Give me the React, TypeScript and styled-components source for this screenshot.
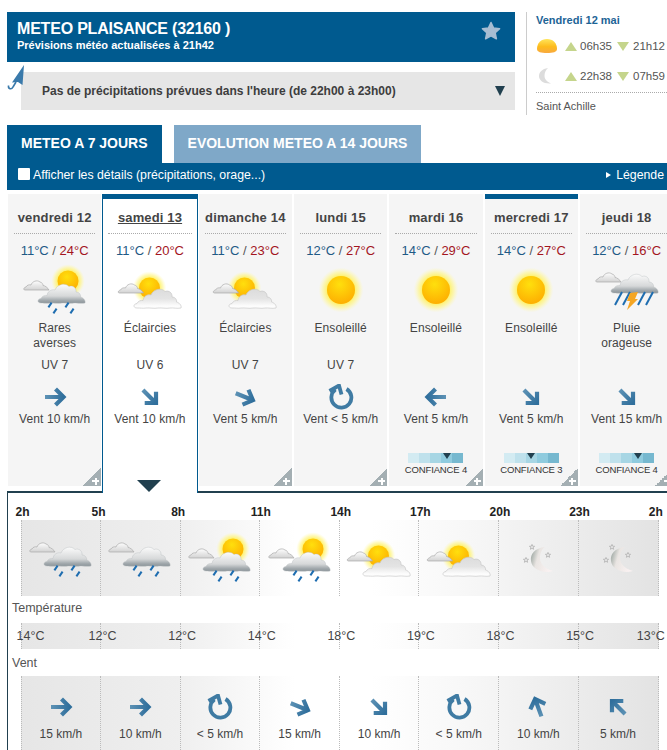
import styled, { createGlobalStyle, css } from 'styled-components';

const BLUE = '#005a8f';
const DARK = '#21404f';
const TEXT = '#444';

const GlobalStyle = createGlobalStyle`
  html, body {
    margin: 0;
    padding: 0;
    background: #fff;
    overflow: hidden;
  }
  body {
    font-family: "Liberation Sans", Arial, sans-serif;
    color: ${TEXT};
  }
`;

type WeatherKind = 'rare' | 'partly' | 'sunny' | 'storm' | 'rain' | 'sunrain' | 'night';

interface Day {
  name: string;
  min: number;
  max: number;
  weather: WeatherKind;
  label: string[];
  uv?: number;
  wind: number | 'var';
  speed: string;
  confidence?: number;
  selected?: boolean;
  marked?: boolean;
}

const days: Day[] = [
  { name: 'vendredi 12', min: 11, max: 24, weather: 'rare', label: ['Rares', 'averses'], uv: 7, wind: 0, speed: 'Vent 10 km/h' },
  { name: 'samedi 13', min: 11, max: 20, weather: 'partly', label: ['Éclaircies'], uv: 6, wind: 45, speed: 'Vent 10 km/h', selected: true },
  { name: 'dimanche 14', min: 11, max: 23, weather: 'partly', label: ['Éclaircies'], uv: 7, wind: 22, speed: 'Vent 5 km/h' },
  { name: 'lundi 15', min: 12, max: 27, weather: 'sunny', label: ['Ensoleillé'], uv: 7, wind: 'var', speed: 'Vent < 5 km/h' },
  { name: 'mardi 16', min: 14, max: 29, weather: 'sunny', label: ['Ensoleillé'], wind: 180, speed: 'Vent 5 km/h', confidence: 4 },
  { name: 'mercredi 17', min: 14, max: 27, weather: 'sunny', label: ['Ensoleillé'], wind: 45, speed: 'Vent 5 km/h', confidence: 3, marked: true },
  { name: 'jeudi 18', min: 12, max: 16, weather: 'storm', label: ['Pluie', 'orageuse'], wind: 45, speed: 'Vent 15 km/h', confidence: 4 },
];

const hours = ['2h', '5h', '8h', '11h', '14h', '17h', '20h', '23h', '2h'];
const hourWeather: WeatherKind[] = ['rain', 'rain', 'sunrain', 'sunrain', 'partly', 'partly', 'night', 'night'];
const temps = [14, 12, 12, 14, 18, 19, 18, 15, 13];
const hourWind: { angle: number | 'var'; speed: string }[] = [
  { angle: 0, speed: '15 km/h' },
  { angle: 0, speed: '10 km/h' },
  { angle: 'var', speed: '< 5 km/h' },
  { angle: 22, speed: '15 km/h' },
  { angle: 45, speed: '10 km/h' },
  { angle: 'var', speed: '< 5 km/h' },
  { angle: -110, speed: '10 km/h' },
  { angle: -135, speed: '5 km/h' },
];

const confidenceColors = ['#d3ebf2', '#bfe1ec', '#a7d6e4', '#8fcbde', '#76b8cf'];

const bigCloud = 'M3 20 C-1 20 -1 16 3 15.5 C4 13 7 12 9 12.5 C9.5 8.5 13 6 17 7 C19 1.5 27 -1 31 3.5 C35 2 38.5 5 38 9 C41 9 43 11.5 42.5 14 C45 14.5 48 17.5 47 20 C43 20.8 39 19.6 36 20 C32 20.8 28 19.6 24 20 C20 20.8 16 19.6 12 20 C9 20.6 6 19.8 3 20 Z';
const smallCloud = 'M1 10 C-1 10 -0.5 7.5 2 7 C3 5 5 4.5 7 5 C8 1.5 13 -0.5 16 2 C18 2.5 19 4 19 5.5 C21 5.5 24 8 25 10 Z';

function Drops() {
  const spots = [[30, 37], [35, 43], [47, 37], [52, 43]];
  return (
    <g stroke="#1e6db0" strokeWidth="2">
      {spots.map(([x, y]) => (
        <line key={`${x}-${y}`} x1={x + 1.6} y1={y - 2.4} x2={x - 1.6} y2={y + 2.4} />
      ))}
    </g>
  );
}

function Sun({ x, y, r }: { x: number; y: number; r: number }) {
  return (
    <g>
      <circle cx={x} cy={y} r={r * 1.6} fill="url(#sunGlow)" />
      <circle cx={x} cy={y} r={r} fill="url(#sunCore)" />
    </g>
  );
}

function Star({ x, y }: { x: number; y: number }) {
  return (
    <polygon
      transform={`translate(${x} ${y})`}
      points="0,-2.6 0.8,-0.8 2.6,-0.7 1.2,0.5 1.6,2.3 0,1.3 -1.6,2.3 -1.2,0.5 -2.6,-0.7 -0.8,-0.8"
      fill="#e6e6e6"
      stroke="#aaa"
      strokeWidth="0.7"
    />
  );
}

function WeatherIcon({ kind }: { kind: WeatherKind }) {
  return (
    <IconSvg viewBox="0 0 70 50">
      {kind === 'sunny' && <Sun x={35} y={22} r={14} />}
      {kind === 'partly' && (
        <g>
          <Sun x={34.5} y={20} r={10.5} />
          <path d={smallCloud} transform="translate(3.5 15)" fill="url(#smallCloud)" stroke="#aaa" strokeWidth="0.7" />
          <path d={bigCloud} transform="translate(19 20)" fill="url(#softCloud)" stroke="#c8c8c8" strokeWidth="0.7" />
        </g>
      )}
      {(kind === 'rare' || kind === 'sunrain') && (
        <g>
          <Sun x={48} y={13} r={10.5} />
          <path d={smallCloud} transform="translate(4 12)" fill="url(#smallCloud)" stroke="#aaa" strokeWidth="0.7" />
          <path d={bigCloud} transform="translate(18 15)" fill="url(#rainCloud)" stroke="#b5babd" strokeWidth="0.4" />
          <Drops />
        </g>
      )}
      {kind === 'rain' && (
        <g>
          <path d={smallCloud} transform="translate(4 6)" fill="url(#smallCloud)" stroke="#aaa" strokeWidth="0.7" />
          <path d={bigCloud} transform="translate(18 10)" fill="url(#rainCloud)" stroke="#b5babd" strokeWidth="0.4" />
          <g transform="translate(0 -5)">
            <Drops />
          </g>
        </g>
      )}
      {kind === 'storm' && (
        <g>
          <path d={smallCloud} transform="translate(4 4)" fill="url(#smallCloud)" stroke="#aaa" strokeWidth="0.7" />
          <path d={bigCloud} transform="translate(19 5)" fill="url(#rainCloud)" stroke="#b5babd" strokeWidth="0.4" />
          <g stroke="#1e6db0" strokeWidth="2">
            <line x1="30" y1="24" x2="23" y2="37" />
            <line x1="38" y1="24" x2="31" y2="37" />
            <line x1="53" y1="24" x2="46" y2="37" />
            <line x1="61" y1="24" x2="54" y2="37" />
          </g>
          <polygon points="38,25 46,24 43,31 46,31 35,42 38,33 35,33" fill="#f5a623" />
        </g>
      )}
      {kind === 'night' && (
        <g>
          <path d="M42 11 C32 12 27 18 28 25 C29 33 39 38 50 35 C42 33 37 28 37 22 C37 17 39 13 42 11 Z" fill="url(#moonShade)" />
          <Star x={29} y={11} />
          <Star x={23} y={24} />
          <Star x={45} y={19} />
        </g>
      )}
    </IconSvg>
  );
}

function WindIcon({ angle }: { angle: number | 'var' }) {
  if (angle === 'var') {
    return (
      <ArrowSvg viewBox="0 0 26 26">
        <path d="M18.5 5 A10 10 0 1 1 7.5 5.5" fill="none" stroke="#3f7ba3" strokeWidth="3.8" />
        <path d="M1.5 7 L11 1.5 L13.5 10.5" fill="none" stroke="#3f7ba3" strokeWidth="3.8" />
      </ArrowSvg>
    );
  }
  return (
    <ArrowSvg viewBox="0 0 26 26">
      <g transform={`rotate(${angle} 13 13)`}>
        <path d="M3 13 H21 M13.5 5 L21.5 13 L13.5 21" fill="none" stroke="url(#windStroke)" strokeWidth="4.2" />
      </g>
    </ArrowSvg>
  );
}

function App() {
  return (
    <Page>
      <GlobalStyle />
      <HiddenDefs>
        <defs>
          <radialGradient id="sunGlow">
            <stop offset="0.55" stopColor="#fff04a" stopOpacity="1" />
            <stop offset="0.8" stopColor="#fff58a" stopOpacity="0.6" />
            <stop offset="1" stopColor="#fff9b0" stopOpacity="0" />
          </radialGradient>
          <radialGradient id="sunCore" cx="0.45" cy="0.3" r="0.8">
            <stop offset="0" stopColor="#ffdf0d" />
            <stop offset="1" stopColor="#fda800" />
          </radialGradient>
          <linearGradient id="smallCloud" x1="0" y1="0" x2="0" y2="1">
            <stop offset="0" stopColor="#fdfdfd" />
            <stop offset="1" stopColor="#d2d2d2" />
          </linearGradient>
          <linearGradient id="softCloud" x1="0" y1="0" x2="0" y2="1">
            <stop offset="0" stopColor="#dcdcdc" />
            <stop offset="0.5" stopColor="#e4e4e4" />
            <stop offset="0.85" stopColor="#fbfbfb" />
            <stop offset="1" stopColor="#ffffff" />
          </linearGradient>
          <linearGradient id="rainCloud" x1="0" y1="0" x2="0" y2="1">
            <stop offset="0" stopColor="#fbfbfb" />
            <stop offset="0.62" stopColor="#d6d8d9" />
            <stop offset="0.84" stopColor="#a3aaae" />
            <stop offset="1" stopColor="#8b9499" />
          </linearGradient>
          <linearGradient id="moonShade" x1="0" y1="0" x2="1" y2="0.3">
            <stop offset="0" stopColor="#8d9a94" />
            <stop offset="0.4" stopColor="#e9e5e2" />
            <stop offset="1" stopColor="#f9f1f1" />
          </linearGradient>
          <linearGradient id="windStroke" x1="0" y1="0" x2="1" y2="0">
            <stop offset="0" stopColor="#5d92b5" />
            <stop offset="1" stopColor="#306f9c" />
          </linearGradient>
          <linearGradient id="riseSun" x1="0" y1="0" x2="0" y2="1">
            <stop offset="0" stopColor="#ffe55a" />
            <stop offset="0.55" stopColor="#fdbb1c" />
            <stop offset="1" stopColor="#f8a940" />
          </linearGradient>
        </defs>
      </HiddenDefs>

      <TopRow>
        <TopLeft>
          <Header>
            <div>
              <City>METEO PLAISANCE (32160 )</City>
              <Updated>Prévisions météo actualisées à 21h42</Updated>
            </div>
            <FavStar viewBox="0 0 20 20">
              <polygon
                points="10,1.5 12.6,7 18.6,7.7 14.2,11.8 15.4,17.8 10,14.8 4.6,17.8 5.8,11.8 1.4,7.7 7.4,7"
                fill="#a7bdd3"
                stroke="#a7bdd3"
                strokeWidth="1.5"
                strokeLinejoin="round"
              />
            </FavStar>
          </Header>
          <RainBar>
            <Umbrella viewBox="0 0 18 26">
              <path d="M17 0 L15.5 20 L11 17 L5 17.5 Z" fill="#3a7aab" />
              <path d="M9 17 L6 22 C4.5 25 1 24 1.5 20.5" fill="none" stroke="#3a7aab" strokeWidth="1.6" />
            </Umbrella>
            <RainText>Pas de précipitations prévues dans l'heure (de 22h00 à 23h00)</RainText>
            <DownCaret />
          </RainBar>
        </TopLeft>
        <Ephemeris>
          <EphDate>Vendredi 12 mai</EphDate>
          <EphRow>
            <EphIcon viewBox="0 0 22 16">
              <path d="M1 11 C1 5 5 1 11 1 C17 1 21 5 21 11 C21 14 17 15 11 15 C5 15 1 14 1 11 Z" fill="url(#riseSun)" />
            </EphIcon>
            <UpMark />
            <EphTime>06h35</EphTime>
            <DownMark />
            <EphTime>21h12</EphTime>
          </EphRow>
          <EphRow>
            <EphIcon viewBox="0 0 22 16">
              <path d="M12 0 C6 1 3 4 3 8 C3 12 7 16 15 15.5 C11 14 8.5 11 8.5 8 C8.5 5 9.5 2 12 0 Z" fill="#dcdcdc" />
            </EphIcon>
            <UpMark />
            <EphTime>22h38</EphTime>
            <DownMark />
            <EphTime>07h59</EphTime>
          </EphRow>
          <Saint>Saint Achille</Saint>
        </Ephemeris>
      </TopRow>

      <Tabs>
        <Tab $active>METEO A 7 JOURS</Tab>
        <Tab>EVOLUTION METEO A 14 JOURS</Tab>
      </Tabs>
      <OptionsBar>
        <DetailsToggle>
          <FakeCheck />
          Afficher les détails (précipitations, orage...)
        </DetailsToggle>
        <Legend>
          <LegendCaret />
          Légende
        </Legend>
      </OptionsBar>

      <DaysGrid>
        {days.map((day) => (
          <DayCard key={day.name} $selected={day.selected} $marked={day.marked}>
            <DayName $selected={day.selected}>{day.name}</DayName>
            <Temps>
              <Cold>{day.min}°C</Cold> / <Hot>{day.max}°C</Hot>
            </Temps>
            <IconSlot>
              <WeatherIcon kind={day.weather} />
            </IconSlot>
            <Condition>
              {day.label.map((line) => (
                <div key={line}>{line}</div>
              ))}
            </Condition>
            <Uv>{day.uv ? `UV ${day.uv}` : ''}</Uv>
            <WindSlot>
              <WindIcon angle={day.wind} />
            </WindSlot>
            <WindText>{day.speed}</WindText>
            {day.confidence && (
              <Confidence>
                <ConfidenceBar>
                  {confidenceColors.map((color, i) => (
                    <ConfidenceStep key={color} $color={color} $active={i === day.confidence! - 1} />
                  ))}
                </ConfidenceBar>
                <ConfidenceText>CONFIANCE {day.confidence}</ConfidenceText>
              </Confidence>
            )}
            {day.selected ? <SelectedCaret /> : <Fold />}
          </DayCard>
        ))}
      </DaysGrid>

      <Detail>
        <HoursRow>
          {hours.map((h, i) => (
            <HourLabel key={`${h}-${i}`}>{h}</HourLabel>
          ))}
        </HoursRow>
        <SkyRow>
          {hourWeather.map((kind, i) => (
            <SkyCell key={i}>
              <WeatherIcon kind={kind} />
            </SkyCell>
          ))}
        </SkyRow>
        <RowTitle>Température</RowTitle>
        <TempStrip>
          {hourWeather.map((_, i) => (
            <TempTick key={i} />
          ))}
          <TempLabels>
            {temps.map((t, i) => (
              <TempLabel key={i}>{t}°C</TempLabel>
            ))}
          </TempLabels>
        </TempStrip>
        <WindTitle>Vent</WindTitle>
        <HourWindRow>
          {hourWind.map((w, i) => (
            <HourWindCell key={i}>
              <WindIcon angle={w.angle} />
              <HourWindText>{w.speed}</HourWindText>
            </HourWindCell>
          ))}
        </HourWindRow>
      </Detail>
    </Page>
  );
}

export default App;

const dayGradient = css`
  background: linear-gradient(90deg, #e6e6e6 0%, #efefef 25%, #fff 43%, #fff 55%, #f6f6f6 72%, #ededed 85%, #e3e3e3 100%);
`;

const Page = styled.div`
  width: 667px;
  height: 750px;
  overflow: hidden;
  box-sizing: border-box;
  padding: 12px 0 0 7px;
`;

const HiddenDefs = styled.svg`
  display: block;
  width: 0;
  height: 0;
`;

const TopRow = styled.div`
  display: flex;
  height: 103px;
`;

const TopLeft = styled.div`
  width: 508px;
  flex: none;
`;

const Header = styled.div`
  height: 50px;
  box-sizing: border-box;
  background: ${BLUE};
  color: #fff;
  padding: 9px 14px 0 10px;
  display: flex;
  justify-content: space-between;
`;

const City = styled.div`
  font-size: 16px;
  font-weight: bold;
  line-height: 16px;
  letter-spacing: -0.2px;
`;

const Updated = styled.div`
  font-size: 11px;
  font-weight: bold;
  line-height: 13px;
  margin-top: 2px;
`;

const FavStar = styled.svg`
  width: 20px;
  height: 20px;
`;

const RainBar = styled.div`
  position: relative;
  height: 38px;
  margin: 10px 0 0 14px;
  background: #e6e6e6;
  display: flex;
  align-items: center;
  justify-content: space-between;
  padding: 0 10px 0 21px;
`;

const Umbrella = styled.svg`
  position: absolute;
  left: -14px;
  top: -7px;
  width: 18px;
  height: 26px;
`;

const RainText = styled.div`
  font-size: 12px;
  font-weight: bold;
  color: #3d3d3d;
`;

const DownCaret = styled.div`
  width: 0;
  height: 0;
  border-left: 5.5px solid transparent;
  border-right: 5.5px solid transparent;
  border-top: 10px solid ${DARK};
`;

const Ephemeris = styled.div`
  margin-left: 11px;
  padding-left: 9px;
  border-left: 1px solid #ccc;
  width: 131px;
  flex: none;
  font-size: 11px;
`;

const EphDate = styled.div`
  font-weight: bold;
  color: #1d6496;
  line-height: 14px;
  margin-top: 1px;
  margin-bottom: 4px;
`;

const EphRow = styled.div`
  display: flex;
  align-items: center;
  height: 30px;
  color: #555;
`;

const EphIcon = styled.svg`
  width: 22px;
  height: 16px;
  flex: none;
  margin-right: 7px;
`;

const UpMark = styled.div`
  width: 0;
  height: 0;
  border-left: 6px solid transparent;
  border-right: 6px solid transparent;
  border-bottom: 9px solid #c5d58c;
  margin-right: 3px;
`;

const DownMark = styled.div`
  width: 0;
  height: 0;
  border-left: 6px solid transparent;
  border-right: 6px solid transparent;
  border-top: 9px solid #c5d58c;
  margin: 0 4px 0 5px;
`;

const EphTime = styled.span`
  font-size: 11.5px;
`;

const Saint = styled.div`
  border-top: 1px dotted #aaa;
  margin-top: 1px;
  padding-top: 7px;
  line-height: 13px;
  color: #555;
`;

const Tabs = styled.div`
  display: flex;
  gap: 12px;
  margin-top: 10px;
`;

const Tab = styled.div<{ $active?: boolean }>`
  height: 38px;
  padding: 0 14px 2px;
  box-sizing: border-box;
  display: flex;
  align-items: center;
  color: #fff;
  font-size: 14px;
  font-weight: bold;
  background: ${(p) => (p.$active ? BLUE : '#7fa8c8')};
`;

const OptionsBar = styled.div`
  height: 27px;
  width: 660px;
  box-sizing: border-box;
  background: ${BLUE};
  color: #fff;
  font-size: 12.3px;
  display: flex;
  align-items: center;
  justify-content: space-between;
  padding: 0 3px 3px 11px;
`;

const DetailsToggle = styled.div`
  display: flex;
  align-items: center;
  gap: 3px;
`;

const FakeCheck = styled.span`
  width: 12px;
  height: 12px;
  background: #fff;
  border-radius: 1px;
  margin-top: -3px;
`;

const Legend = styled.div`
  display: flex;
  align-items: center;
  gap: 5px;
`;

const LegendCaret = styled.span`
  width: 0;
  height: 0;
  border-top: 3.5px solid transparent;
  border-bottom: 3.5px solid transparent;
  border-left: 5px solid #fff;
`;

const DaysGrid = styled.div`
  display: grid;
  grid-template-columns: repeat(7, 93.33px);
  column-gap: 2px;
  align-items: start;
  margin: 4px 0 0 1px;
`;

const DayCard = styled.div<{ $selected?: boolean; $marked?: boolean }>`
  position: relative;
  box-sizing: border-box;
  height: ${(p) => (p.$selected ? '299px' : '292px')};
  margin: ${(p) => (p.$selected ? '0 -1px' : '0')};
  padding: 11px 6px 0;
  text-align: center;
  font-size: 12px;
  letter-spacing: 0.1px;
  background: ${(p) => (p.$selected ? '#fff' : '#f5f5f5')};
  border-top: 5px solid ${(p) => (p.$selected || p.$marked ? BLUE : 'transparent')};
  z-index: ${(p) => (p.$selected ? 1 : 0)};
  ${(p) =>
    p.$selected &&
    css`
      border-left: 1px solid ${BLUE};
      border-right: 1px solid ${BLUE};
      padding: 11px 5px 0;
    `}
`;

const DayName = styled.div<{ $selected?: boolean }>`
  font-size: 13px;
  font-weight: bold;
  line-height: 16px;
  letter-spacing: 0.15px;
  padding-bottom: 7px;
  white-space: nowrap;
  border-bottom: 1px dotted #aaa;
  color: #444;
  text-decoration: ${(p) => (p.$selected ? 'underline' : 'none')};
`;

const Temps = styled.div`
  margin-top: 10px;
  line-height: 14px;
  font-size: 13px;
  letter-spacing: 0;
  color: #555;
`;

const Cold = styled.span`
  color: #1f5a85;
`;

const Hot = styled.span`
  color: #a3151f;
`;

const IconSlot = styled.div`
  height: 50px;
  margin-top: 10px;
  display: flex;
  justify-content: center;
`;

const IconSvg = styled.svg`
  width: 70px;
  height: 50px;
  flex: none;
  overflow: visible;
`;

const Condition = styled.div`
  height: 30px;
  margin-top: 3px;
  line-height: 15px;
`;

const Uv = styled.div`
  height: 14px;
  line-height: 14px;
  margin-top: 7px;
`;

const WindSlot = styled.div`
  height: 26px;
  margin-top: 12px;
  display: flex;
  justify-content: center;
`;

const ArrowSvg = styled.svg`
  width: 26px;
  height: 26px;
  flex: none;
`;

const WindText = styled.div`
  line-height: 14px;
  margin-top: 2px;
  white-space: nowrap;
`;

const Confidence = styled.div`
  margin-top: 27px;
`;

const ConfidenceBar = styled.div`
  display: flex;
  justify-content: center;
`;

const ConfidenceStep = styled.div<{ $color: string; $active?: boolean }>`
  position: relative;
  width: 11px;
  height: 10px;
  background: ${(p) => p.$color};
  ${(p) =>
    p.$active &&
    css`
      &::after {
        content: '';
        position: absolute;
        left: 1.5px;
        top: 0;
        border-left: 4px solid transparent;
        border-right: 4px solid transparent;
        border-top: 6px solid ${DARK};
      }
    `}
`;

const ConfidenceText = styled.div`
  font-size: 9.5px;
  line-height: 13px;
  letter-spacing: -0.15px;
  color: #333;
  white-space: nowrap;
`;

const Fold = styled.div`
  position: absolute;
  right: 0;
  bottom: 0;
  width: 18px;
  height: 18px;
  background: linear-gradient(135deg, transparent 50%, #a4afb3 50%);
  &::before {
    content: '';
    position: absolute;
    right: 2px;
    bottom: 4px;
    width: 7px;
    height: 2px;
    background: #fff;
  }
  &::after {
    content: '';
    position: absolute;
    right: 4.5px;
    bottom: 1.5px;
    width: 2px;
    height: 7px;
    background: #fff;
  }
`;

const SelectedCaret = styled.div`
  position: absolute;
  left: 34px;
  bottom: 1px;
  width: 0;
  height: 0;
  border-left: 12px solid transparent;
  border-right: 12px solid transparent;
  border-top: 12px solid ${DARK};
`;

const Detail = styled.div`
  width: 660px;
  box-sizing: border-box;
  margin-top: -2px;
  border-top: 2px solid ${DARK};
  border-left: 1px solid ${DARK};
  padding-left: 12.5px;
`;

const HoursRow = styled.div`
  display: grid;
  grid-template-columns: repeat(9, 79.6px);
  height: 27px;
  margin-left: -8.5px;
  padding-top: 12px;
  box-sizing: border-box;
`;

const HourLabel = styled.div`
  font-size: 12px;
  font-weight: bold;
  line-height: 14px;
  color: #222;
  &:first-child {
    padding-left: 3.5px;
  }
`;

const SkyRow = styled.div`
  display: grid;
  grid-template-columns: repeat(8, 79.6px);
  width: 637px;
  height: 76px;
  ${dayGradient}
  border-right: 1px dotted #bbb;
`;

const SkyCell = styled.div`
  border-left: 1px dotted #bbb;
  display: flex;
  justify-content: center;
  padding-top: 16px;
  box-sizing: border-box;
`;

const RowTitle = styled.div`
  font-size: 12.5px;
  line-height: 14px;
  margin: 5px 0 0 -8.5px;
  color: #555;
`;

const WindTitle = styled(RowTitle)`
  margin-top: 7px;
`;

const TempStrip = styled.div`
  display: grid;
  grid-template-columns: repeat(8, 79.6px);
  width: 637px;
  height: 26px;
  margin-top: 8px;
  position: relative;
  ${dayGradient}
  border-right: 1px dotted #bbb;
`;

const TempTick = styled.div`
  border-left: 1px dotted #bbb;
`;

const TempLabels = styled.div`
  position: absolute;
  left: -11.5px;
  top: 0;
  display: grid;
  grid-template-columns: repeat(9, 79.6px);
  line-height: 26px;
  font-size: 12.5px;
`;

const TempLabel = styled.div`
  color: #444;
  &:first-child {
    padding-left: 7.5px;
  }
  &:last-child {
    margin-left: -9px;
  }
`;

const HourWindRow = styled.div`
  display: grid;
  grid-template-columns: repeat(8, 79.6px);
  width: 637px;
  height: 80px;
  margin-top: 6px;
  ${dayGradient}
  border-right: 1px dotted #bbb;
`;

const HourWindCell = styled.div`
  border-left: 1px dotted #bbb;
  display: flex;
  flex-direction: column;
  align-items: center;
  padding-top: 18px;
  box-sizing: border-box;
`;

const HourWindText = styled.div`
  font-size: 12px;
  line-height: 14px;
  margin-top: 7px;
`;
